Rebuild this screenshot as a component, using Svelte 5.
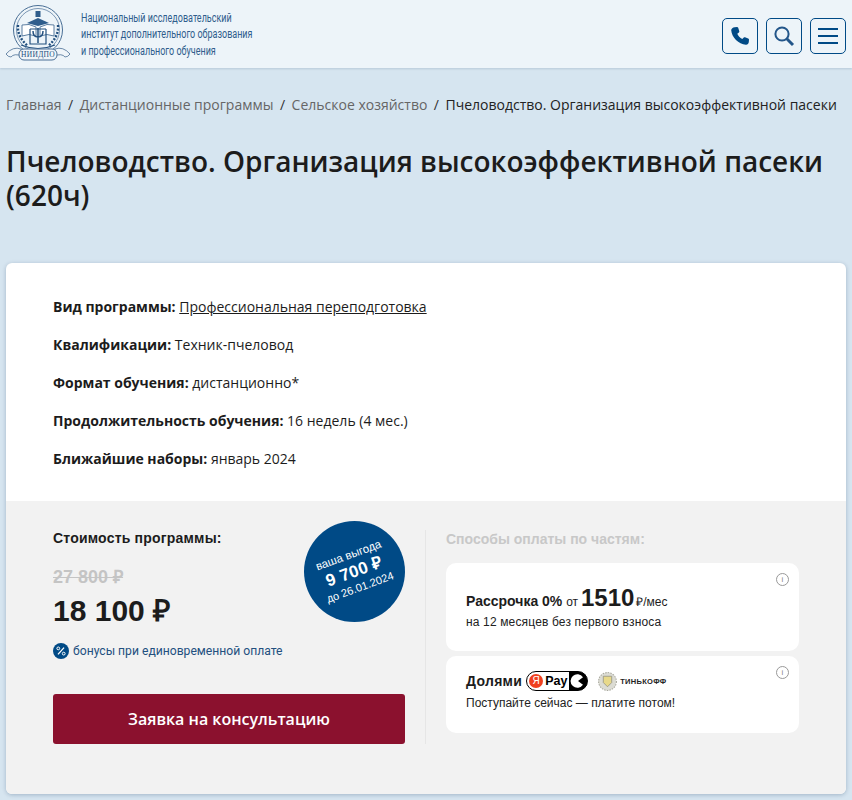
<script>
    const facts = [
        { label: 'Вид программы:', value: 'Профессиональная переподготовка', link: true },
        { label: 'Квалификации:', value: 'Техник-пчеловод' },
        { label: 'Формат обучения:', value: 'дистанционно*' },
        { label: 'Продолжительность обучения:', value: '16 недель (4 мес.)' },
        { label: 'Ближайшие наборы:', value: 'январь 2024' }
    ];
    const crumbs = ['Главная', 'Дистанционные программы', 'Сельское хозяйство'];
</script>

<div class="page">
    <header class="topbar">
        <div class="brand">
            <svg class="logo" width="66" height="58" viewBox="0 0 66 58" fill="none" stroke="#4a6f96">
                <circle cx="32" cy="27" r="24.5" stroke-width="1" />
                <circle cx="32" cy="27" r="21.5" stroke-width="0.7" />
                <rect x="29.5" y="8" width="5" height="6" fill="#2f5d8c" stroke="none" />
                <path d="M21 20 L32 15 L43 20 L32 23 Z" fill="#2f5d8c" stroke="none" />
                <path d="M16 22 Q23 20 30 24 V33 Q23 30 16 33 Z M48 22 Q41 20 34 24 V33 Q41 30 48 33 Z" stroke-width="0.9" fill="#fff" />
                <path d="M24 26 V41 H40 V26 M24 26 H40" stroke="#23507f" stroke-width="1.2" />
                <path d="M27 28 Q27 34 32 34 Q37 34 37 28 M32 25 V40" stroke="#23507f" stroke-width="1.5" />
                <path d="M12 22 Q11 34 22 43 M52 22 Q53 34 42 43" stroke="#23507f" stroke-width="2.4" stroke-dasharray="2 1.5" />
                <path d="M15 42 Q32 49 49 42" stroke="#23507f" stroke-width="1.2" />
                <path d="M0 51 Q7 43 15 46 L16 53 Q8 50 5 54 Q2 54 0 51 Z M64 51 Q57 43 49 46 L48 53 Q56 50 59 54 Q62 54 64 51 Z" stroke-width="0.8" fill="#f0f5f9" />
                <rect x="13" y="46" width="38" height="11" rx="5" fill="#f0f5f9" stroke-width="1" />
                <text x="32" y="54.3" class="logo-text" text-anchor="middle">НИИДПО</text>
            </svg>
            <div class="brand-name">
                <span>Национальный исследовательский</span>
                <span>институт дополнительного образования</span>
                <span>и профессионального обучения</span>
            </div>
        </div>
        <div class="actions">
            <button class="icon-btn" aria-label="Телефон">
                <svg width="20" height="20" viewBox="0 0 20 20">
                    <path d="M4.6 1.2 L7 1 C7.6 1 8 1.3 8.2 1.8 L9.3 5.2 C9.4 5.7 9.3 6.1 8.9 6.4 L7.3 7.7 C8.1 9.7 10 11.8 12.3 13 L13.8 11.5 C14.1 11.2 14.6 11.1 15 11.2 L18.2 12.4 C18.7 12.6 19 13 19 13.5 L18.8 16 C18.7 17.6 17.5 18.9 15.9 18.8 C8.6 18.3 1.7 11.3 1.2 4.3 C1.1 2.7 3 1.3 4.6 1.2 Z" fill="#004a86" />
                </svg>
            </button>
            <button class="icon-btn" aria-label="Поиск">
                <svg width="22" height="22" viewBox="0 0 22 22" fill="none" stroke="#23568a">
                    <circle cx="9" cy="9" r="6.6" stroke-width="2" />
                    <path d="M13.8 13.8 L20 20" stroke-width="3" />
                </svg>
            </button>
            <button class="icon-btn burger" aria-label="Меню">
                <span></span><span></span><span></span>
            </button>
        </div>
    </header>

    <nav class="crumbs">
        {#each crumbs as crumb}
            <span class="crumb">{crumb}</span>
            <span class="sep">/</span>
        {/each}
        <span class="current">Пчеловодство. Организация высокоэффективной пасеки</span>
    </nav>

    <h1>Пчеловодство. Организация высокоэффективной пасеки (620ч)</h1>

    <main class="card">
        <section class="facts">
            {#each facts as fact}
                <p>
                    <b>{fact.label}</b>
                    {#if fact.link}<u>{fact.value}</u>{:else}{fact.value}{/if}
                </p>
            {/each}
        </section>

        <section class="pricing">
            <div class="cost">
                <div class="cost-title">Стоимость программы:</div>
                <div class="old-price">27 800 ₽</div>
                <div class="new-price">18 100 ₽</div>
                <div class="bonus">
                    <svg class="percent" width="16" height="16" viewBox="0 0 16 16" aria-hidden="true">
                        <circle cx="8" cy="8" r="8" fill="#004a86" />
                        <path d="M11 4.6 L5 11.4" stroke="#fff" stroke-width="1.3" />
                        <circle cx="5.3" cy="5.4" r="1.4" fill="none" stroke="#fff" />
                        <circle cx="10.7" cy="10.6" r="1.4" fill="none" stroke="#fff" />
                    </svg>
                    бонусы при единовременной оплате
                </div>
                <button class="cta">Заявка на консультацию</button>
                <div class="badge">
                    <div class="badge-text">
                        <span>ваша выгода</span>
                        <strong>9 700 ₽</strong>
                        <span class="until">до 26.01.2024</span>
                    </div>
                </div>
            </div>

            <div class="parts">
                <div class="parts-title">Способы оплаты по частям:</div>
                <div class="plan plan-first">
                    <span class="info">i</span>
                    <div class="plan-line">
                        <b>Рассрочка 0%</b> <span class="small">от</span>
                        <span class="amount">1510</span>
                        <span class="small">₽/мес</span>
                    </div>
                    <div class="plan-note">на 12 месяцев без первого взноса</div>
                </div>
                <div class="plan plan-second">
                    <span class="info">i</span>
                    <div class="dolyami">
                        <b>Долями</b>
                        <span class="ypay">
                            <span class="ya">Я</span>
                            <span class="pay">Pay</span>
                            <svg class="ypay-end" width="18" height="18" viewBox="0 0 18 18">
                                <path d="M15 5.2 A6.8 6.8 0 1 0 15 12.8 L10 9 Z" fill="#fff" />
                            </svg>
                        </span>
                        <span class="tinkoff">
                            <svg width="21" height="21" viewBox="0 0 20 20">
                                <circle cx="10" cy="10" r="8.5" fill="#dcdcd4" stroke="#a9a99e" stroke-dasharray="1.5 1" />
                                <path d="M6 5 H14 V11 L10 15 L6 11 Z" fill="#e8d98a" stroke="#8d8d80" stroke-width="0.7" />
                            </svg>
                            <span class="tinkoff-name">ТИНЬКОФФ</span>
                        </span>
                    </div>
                    <div class="plan-note">Поступайте сейчас — платите потом!</div>
                </div>
            </div>
        </section>
    </main>
</div>

<style>
    :global(body) {
        margin: 0;
        background: #d6e5f0;
    }

    .page {
        height: 800px;
        overflow: hidden;
        font-family: "Open Sans", sans-serif;
        color: #1c1c1c;
    }

    .topbar {
        height: 68px;
        box-sizing: border-box;
        display: flex;
        align-items: center;
        justify-content: space-between;
        padding: 3px 6px 0 6px;
        background: #edf4f9;
        box-shadow: 0 1px 2px rgba(0, 40, 80, 0.15);
    }

    .brand {
        display: flex;
        align-items: center;
        gap: 9px;
    }

    .logo {
        display: block;
        margin-top: -8px;
    }

    .logo-text {
        font-family: "Liberation Serif", serif;
        font-size: 7.5px;
        fill: #23507f;
        stroke: none;
        letter-spacing: 0.3px;
    }

    .brand-name {
        display: flex;
        flex-direction: column;
        font-family: "Roboto", sans-serif;
        font-size: 12px;
        line-height: 16.5px;
        color: #2f5d8c;
        transform-origin: left center;
        transform: scaleX(0.75) translateY(-1px);
        width: 220px;
        white-space: nowrap;
    }

    .actions {
        display: flex;
        gap: 8px;
        margin-top: 1px;
    }

    .icon-btn {
        width: 36px;
        height: 36px;
        box-sizing: border-box;
        padding: 0;
        display: flex;
        flex-direction: column;
        align-items: center;
        justify-content: center;
        background: transparent;
        border: 1px solid #004a86;
        border-radius: 5px;
    }

    .burger {
        gap: 5px;
    }

    .burger span {
        display: block;
        width: 20px;
        height: 2px;
        background: #004a86;
    }

    .crumbs {
        display: flex;
        gap: 6.5px;
        padding: 27px 0 0 6px;
        font-size: 14px;
        line-height: 19px;
        white-space: nowrap;
        color: #333;
    }

    .crumb {
        color: #666;
    }

    .current {
        color: #222;
    }

    h1 {
        margin: 30px 0 0;
        padding: 0 6px;
        font-size: 28px;
        line-height: 34px;
        font-weight: 600;
        color: #1c1c1c;
    }

    .card {
        margin: 51px 6px 0;
        background: #fff;
        border-radius: 6px;
        box-shadow: 0 1px 4px rgba(0, 40, 80, 0.25);
        overflow: hidden;
    }

    .facts {
        padding: 34px 47px 14px;
        font-size: 14px;
        line-height: 19px;
    }

    .facts p {
        margin: 0 0 19px;
    }

    .facts b {
        font-weight: 700;
    }

    .pricing {
        display: flex;
        background: #f2f2f2;
        padding: 29px 47px 50px;
        font-family: "Liberation Sans", sans-serif;
    }

    .cost {
        position: relative;
        width: 352px;
        flex: none;
    }

    .cost-title {
        font-weight: bold;
        font-size: 14px;
        line-height: 16px;
        letter-spacing: 0.2px;
    }

    .old-price {
        margin-top: 21px;
        font-size: 18px;
        line-height: 20px;
        font-weight: bold;
        color: #c4c4c4;
        text-decoration: line-through;
    }

    .new-price {
        margin-top: 6px;
        font-size: 30px;
        line-height: 36px;
        font-weight: bold;
        color: #1c1c1c;
    }

    .bonus {
        display: flex;
        align-items: center;
        gap: 4px;
        margin-top: 14px;
        font-family: "Roboto", sans-serif;
        font-size: 12.15px;
        line-height: 16px;
        color: #23507f;
    }

    .percent {
        flex: none;
        display: block;
    }

    .cta {
        display: block;
        width: 352px;
        height: 50px;
        margin-top: 35px;
        border: none;
        border-radius: 3px;
        background: #8b112e;
        color: #fff;
        font-family: "Open Sans", sans-serif;
        font-size: 16px;
        font-weight: 600;
    }

    .badge {
        position: absolute;
        left: 251px;
        top: -9px;
        width: 101px;
        height: 101px;
        border-radius: 50%;
        background: #004a86;
        display: flex;
        align-items: center;
        justify-content: center;
    }

    .badge-text {
        display: flex;
        flex-direction: column;
        align-items: center;
        color: #fff;
        font-size: 11.5px;
        line-height: 15px;
        transform: rotate(-20deg);
        white-space: nowrap;
    }

    .badge-text strong {
        font-size: 17px;
        line-height: 19px;
        letter-spacing: 0.3px;
    }

    .until {
        font-size: 11px;
    }

    .parts {
        flex: 1;
        margin-left: 20px;
        padding-left: 20px;
        border-left: 1px solid #e6e6e6;
    }

    .parts-title {
        margin-top: 1px;
        font-weight: bold;
        font-size: 14px;
        line-height: 16px;
        color: #c8c8c8;
    }

    .plan {
        position: relative;
        background: #fff;
        border-radius: 10px;
        box-sizing: border-box;
        padding-left: 20px;
    }

    .plan-first {
        height: 88px;
        margin-top: 16px;
        padding-top: 18px;
    }

    .plan-second {
        height: 77px;
        margin-top: 5px;
        padding-top: 13px;
    }

    .info {
        position: absolute;
        right: 10px;
        top: 10px;
        width: 11px;
        height: 11px;
        border: 1px solid #999;
        border-radius: 50%;
        font-size: 8px;
        line-height: 11px;
        text-align: center;
        color: #888;
    }

    .plan-line {
        font-size: 14px;
        line-height: 34px;
    }

    .small {
        font-size: 12px;
    }

    .amount {
        font-size: 24px;
        font-weight: bold;
        margin: 0 -2px 0 -1px;
    }

    .plan-note {
        font-size: 12px;
        line-height: 15px;
        color: #222;
    }

    .plan-first .plan-note {
        margin-top: -4px;
        letter-spacing: 0.15px;
    }

    .dolyami {
        display: flex;
        align-items: center;
        height: 24px;
        font-size: 14px;
        margin-bottom: 3px;
    }

    .dolyami b {
        letter-spacing: 0.3px;
    }

    .ypay {
        display: flex;
        align-items: center;
        margin-left: 4px;
        width: 62px;
        height: 20px;
        box-sizing: border-box;
        border: 1.5px solid #000;
        border-radius: 10px;
        background: linear-gradient(90deg, #fff 0 70%, #000 70%);
        overflow: hidden;
    }

    .ya {
        flex: none;
        width: 14px;
        height: 14px;
        margin-left: 2px;
        border-radius: 50%;
        background: #f0401f;
        color: #fff;
        font-size: 10px;
        line-height: 14px;
        text-align: center;
    }

    .pay {
        margin-left: 2px;
        font-size: 12.5px;
        font-weight: bold;
        color: #000;
    }

    .ypay-end {
        margin-left: 1px;
        flex: none;
    }

    .tinkoff {
        display: flex;
        align-items: center;
        gap: 2px;
        margin-left: 9px;
    }

    .tinkoff-name {
        font-size: 7.5px;
        font-weight: bold;
        letter-spacing: 0.3px;
        color: #222;
    }
</style>
